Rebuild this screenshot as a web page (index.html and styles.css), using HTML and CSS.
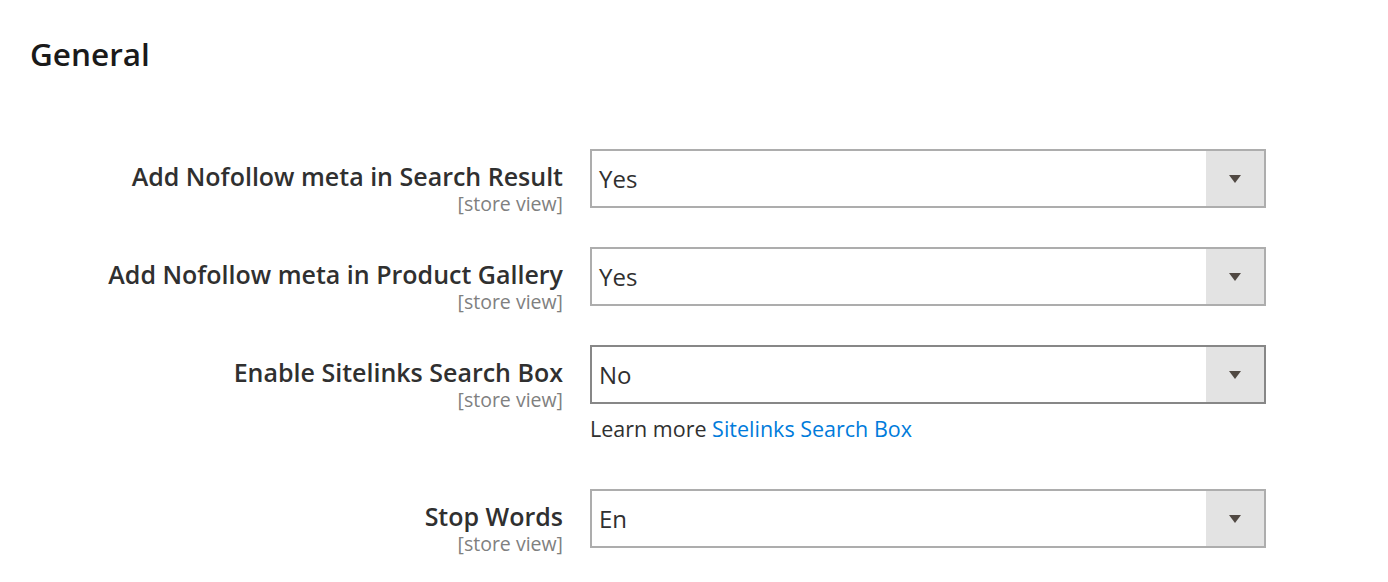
FILE: index.html
```html
<!DOCTYPE html>
<html lang="en">

<head>
    <meta charset="UTF-8">
    <meta name="viewport" content="width=device-width, initial-scale=1.0">
    <title>General</title>
    <link rel="stylesheet" href="styles.css">
</head>

<body>
    <h2 class="section-title">General</h2>

    <div class="fieldset">
        <div class="row">
            <div class="label">
                <span class="label-text">Add Nofollow meta in Search Result</span>
                <span class="scope">[store view]</span>
            </div>
            <div class="value">
                <div class="select">
                    <span class="select-value">Yes</span>
                    <span class="select-arrow"></span>
                </div>
            </div>
        </div>

        <div class="row">
            <div class="label">
                <span class="label-text">Add Nofollow meta in Product Gallery</span>
                <span class="scope">[store view]</span>
            </div>
            <div class="value">
                <div class="select">
                    <span class="select-value">Yes</span>
                    <span class="select-arrow"></span>
                </div>
            </div>
        </div>

        <div class="row">
            <div class="label">
                <span class="label-text">Enable Sitelinks Search Box</span>
                <span class="scope">[store view]</span>
            </div>
            <div class="value">
                <div class="select active">
                    <span class="select-value">No</span>
                    <span class="select-arrow"></span>
                </div>
                <p class="note">Learn more <a href="#">Sitelinks Search Box</a></p>
            </div>
        </div>

        <div class="row">
            <div class="label">
                <span class="label-text">Stop Words</span>
                <span class="scope">[store view]</span>
            </div>
            <div class="value">
                <div class="select">
                    <span class="select-value">En</span>
                    <span class="select-arrow"></span>
                </div>
            </div>
        </div>
    </div>
</body>

</html>
```

FILE: styles.css
```css
body {
    margin: 0;
    font-family: "Open Sans", "Liberation Sans", sans-serif;
    background-color: #fff;
    color: #303030;
}

.section-title {
    margin: 0;
    padding: 34px 0 0 30px;
    font-size: 31.5px;
    font-weight: 600;
    line-height: 40px;
    color: #1a1a1a;
}

.fieldset {
    padding-top: 75px;
}

.row {
    display: grid;
    grid-template-columns: 563px 676px;
    column-gap: 27px;
    align-items: start;
    margin-bottom: 32px;
}

.label {
    display: flex;
    flex-direction: column;
    align-items: flex-end;
    text-align: right;
    padding-top: 12px;
}

.label-text {
    font-size: 25px;
    font-weight: 600;
    line-height: 30px;
    color: #303030;
}

.scope {
    margin-top: 2px;
    font-size: 19.5px;
    line-height: 22px;
    color: #808080;
}

.select {
    display: flex;
    height: 59px;
    box-sizing: border-box;
    border: 2px solid #adadad;
}

.select.active {
    border-color: #878787;
}

.select-value {
    flex: 1;
    padding-left: 7px;
    font-size: 24px;
    line-height: 55px;
    color: #303030;
}

.select-arrow {
    width: 58px;
    background-color: #e3e3e3;
    display: flex;
    align-items: center;
    justify-content: center;
}

.select-arrow::after {
    content: "";
    border-left: 6px solid transparent;
    border-right: 6px solid transparent;
    border-top: 8px solid #514943;
}

.note {
    margin: 10px 0 13px;
    font-size: 21.5px;
    line-height: 30px;
    color: #303030;
}

.note a {
    color: #007bdb;
    text-decoration: none;
}
```
